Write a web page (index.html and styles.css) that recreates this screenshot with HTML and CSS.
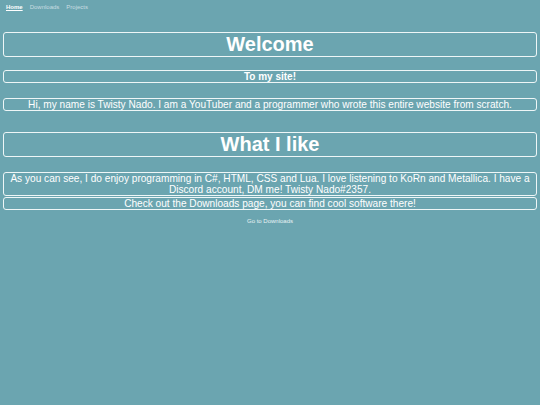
FILE: index.html
```html
<!DOCTYPE html>
<html>
<head>
<meta charset="utf-8">
<link rel="stylesheet" href="styles.css">
</head>
<body>
<nav class="nav">
  <a class="nav-link active" href="#">Home</a>
  <a class="nav-link" href="#">Downloads</a>
  <a class="nav-link" href="#">Projects</a>
</nav>
<main class="content">
  <h1 class="box title first">Welcome</h1>
  <h3 class="box subtitle">To my site!</h3>
  <p class="box text intro">Hi, my name is Twisty Nado. I am a YouTuber and a programmer who wrote this entire website from scratch.</p>
  <h1 class="box title second">What I like</h1>
  <p class="box text likes">As you can see, I do enjoy programming in C#, HTML, CSS and Lua. I love listening to KoRn and Metallica. I have a Discord account, DM me! Twisty Nado#2357.</p>
  <p class="box text check">Check out the Downloads page, you can find cool software there!</p>
  <a class="go" href="#">Go to Downloads</a>
</main>
</body>
</html>
```
FILE: styles.css
```css
html, body {
  margin: 0;
  padding: 0;
}
body {
  background: #6ba5b0;
  font-family: "Liberation Sans", Arial, sans-serif;
  color: #ffffff;
  width: 540px;
  height: 405px;
  overflow: hidden;
}
.nav {
  display: flex;
  gap: 7px;
  padding: 4px 6px 0;
  height: 10px;
  font-size: 6px;
}
.nav-link {
  color: #c9dde1;
  text-decoration: none;
}
.nav-link.active {
  color: #ffffff;
  font-weight: bold;
  text-decoration: underline;
}
.content {
  display: flex;
  flex-direction: column;
  padding: 0 3px;
}
.box {
  border: 1px solid #eef6f7;
  border-radius: 3px;
  text-align: center;
  margin: 0;
  color: #ffffff;
}
.title {
  font-size: 20px;
  font-weight: bold;
  line-height: 23px;
}
.first {
  margin-top: 18px;
}
.subtitle {
  font-size: 10px;
  font-weight: bold;
  line-height: 11px;
  margin-top: 13px;
}
.text {
  font-size: 10.12px;
  line-height: 11px;
  font-weight: normal;
}
.intro {
  margin-top: 15px;
}
.second {
  margin-top: 21px;
}
.likes {
  margin-top: 15px;
}
.check {
  margin-top: 1px;
}
.go {
  align-self: center;
  margin-top: 8px;
  font-size: 6px;
  color: #e8f2f4;
  text-decoration: none;
}
```
